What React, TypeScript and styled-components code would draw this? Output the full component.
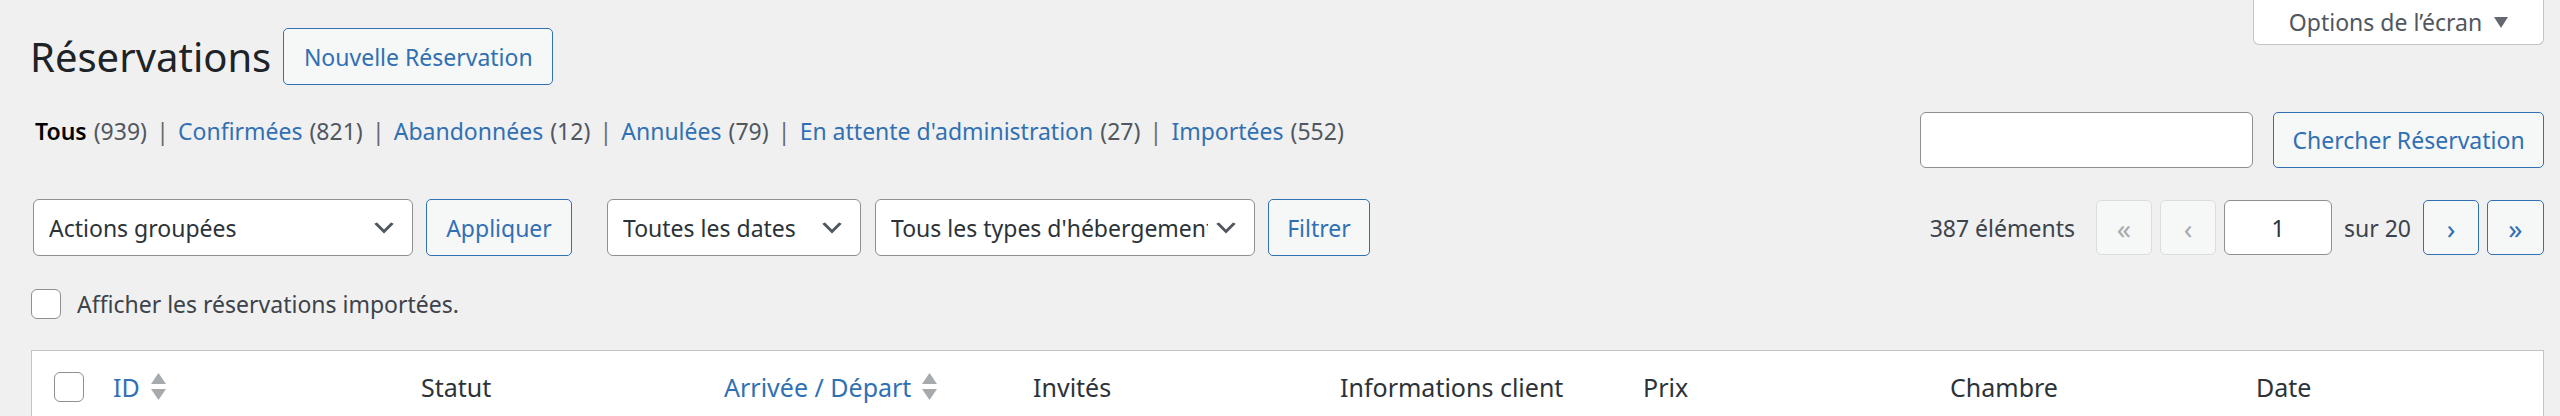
import React from 'react';
import styled, { createGlobalStyle } from 'styled-components';

const GlobalStyle = createGlobalStyle`
  html, body { margin: 0; padding: 0; background: #f0f0f1; }
  body {
    font-family: "Noto Sans", "Open Sans", "Liberation Sans", sans-serif;
    color: #3c434a;
    font-size: 23px;
  }
  * { box-sizing: border-box; }
`;

const BLUE = '#3070b3';

const Page = styled.div`
  width: 2560px;
  height: 416px;
  overflow: hidden;
  padding: 0 16px 0 30px;
  display: flex;
  flex-direction: column;
`;

const HeaderRow = styled.div`
  display: flex;
  align-items: flex-start;
  height: 85px;
`;

const TitleGroup = styled.div`
  display: flex;
  align-items: center;
  gap: 12px;
  margin-top: 28px;
`;

const Title = styled.h1`
  margin: 0;
  font-size: 40px;
  font-weight: 400;
  line-height: 57px;
  color: #1d2327;
`;

const Button = styled.button<{ $w: number; $h?: number; $disabled?: boolean; $size?: number }>`
  width: ${(p) => p.$w}px;
  height: ${(p) => p.$h ?? 57}px;
  padding: 0;
  display: inline-flex;
  align-items: center;
  justify-content: center;
  background: #f6f7f7;
  border: 1px solid ${(p) => (p.$disabled ? '#dcdcde' : BLUE)};
  border-radius: 5px;
  color: ${(p) => (p.$disabled ? '#a7aaad' : BLUE)};
  font-family: inherit;
  font-size: ${(p) => p.$size ?? 23}px;
  font-weight: 400;
  flex: none;
`;

const ScreenOptions = styled.div`
  margin-left: auto;
  width: 291px;
  height: 45px;
  background: #fff;
  border: 1px solid #c3c4c7;
  border-top: none;
  border-radius: 0 0 6px 6px;
  display: flex;
  align-items: center;
  justify-content: center;
  gap: 12px;
  color: #50575e;
  font-size: 23px;
`;

const FilterRow = styled.div`
  display: flex;
  justify-content: space-between;
  align-items: flex-start;
  margin-top: 27px;
`;

const StatusList = styled.ul`
  list-style: none;
  margin: 1px 0 0 5px;
  padding: 0;
  display: flex;
  align-items: center;
  line-height: 36px;
  color: #50575e;
`;

const StatusItem = styled.li<{ $current?: boolean }>`
  display: flex;
  gap: 7px;
  a {
    color: ${(p) => (p.$current ? '#000' : BLUE)};
    font-weight: ${(p) => (p.$current ? 600 : 400)};
    text-decoration: none;
  }
`;

const Sep = styled.span`
  color: #646970;
  width: 31px;
  text-align: center;
  flex: none;
`;

const SearchBox = styled.div`
  display: flex;
  gap: 20px;
`;

const TextInput = styled.div<{ $w: number; $h?: number }>`
  width: ${(p) => p.$w}px;
  height: ${(p) => p.$h ?? 56}px;
  background: #fff;
  border: 1px solid #8c8f94;
  border-radius: 6px;
  display: flex;
  align-items: center;
  justify-content: center;
  color: #2c3338;
  flex: none;
`;

const Tablenav = styled.div`
  display: flex;
  align-items: center;
  justify-content: space-between;
  margin-top: 31px;
  height: 57px;
`;

const Actions = styled.div`
  display: flex;
  align-items: center;
  padding-left: 3px;
`;

const Select = styled.div<{ $w: number; $gap: number }>`
  width: ${(p) => p.$w}px;
  height: 57px;
  margin-right: ${(p) => p.$gap}px;
  background: #fff;
  border: 1px solid #8c8f94;
  border-radius: 6px;
  display: flex;
  align-items: center;
  padding: 0 14px 0 15px;
  color: #2c3338;
  flex: none;
  span {
    flex: 1;
    overflow: hidden;
    white-space: nowrap;
    margin-right: 4px;
  }
  svg { flex: none; }
`;

const Spacer = styled.div<{ $w: number }>`
  width: ${(p) => p.$w}px;
  flex: none;
`;

const Pagination = styled.div`
  display: flex;
  align-items: center;
  gap: 8px;
  color: #3c434a;
`;

const Count = styled.span`
  margin-right: 13px;
`;

const PageOf = styled.span`
  margin: 0 4px;
`;

const CheckRow = styled.label`
  display: flex;
  align-items: center;
  gap: 16px;
  margin-top: 32px;
  margin-left: 1px;
  color: #3c434a;
`;

const Checkbox = styled.span`
  width: 30px;
  height: 30px;
  background: #fff;
  border: 1px solid #8c8f94;
  border-radius: 6px;
  flex: none;
`;

const Table = styled.div`
  margin-top: 30px;
  margin-left: 1px;
  width: 2513px;
  height: 140px;
  background: #fff;
  border: 1px solid #c3c4c7;
  flex: none;
`;

const HeadRow = styled.div`
  display: grid;
  grid-template-columns: 67px 308px 303px 309px 307px 303px 307px 306px 1fr;
  height: 72px;
  align-items: center;
  color: #2c3338;
  font-size: 25px;
`;

const CheckCell = styled.div`
  padding-left: 22px;
  display: flex;
  align-items: center;
`;

const Th = styled.div<{ $sortable?: boolean }>`
  padding-left: 14px;
  display: flex;
  align-items: center;
  gap: 11px;
  color: ${(p) => (p.$sortable ? BLUE : '#2c3338')};
`;

const Chevron = () => (
  <svg width="28" height="28" viewBox="0 0 20 20">
    <path d="M5 6l5 5 5-5 2 1-7 7-7-7 2-1z" fill="#50575e" />
  </svg>
);

const SortIcon = () => (
  <svg width="15" height="30" viewBox="0 0 15 30">
    <polygon points="0,12 7.5,1 15,12" fill="#a7aaad" />
    <polygon points="0,17 15,17 7.5,28" fill="#a7aaad" />
  </svg>
);

const DownTriangle = () => (
  <svg width="14" height="11" viewBox="0 0 14 11">
    <polygon points="0,0 14,0 7,11" fill="#646970" />
  </svg>
);

const statuses: { label: string; count: number; current?: boolean }[] = [
  { label: 'Tous', count: 939, current: true },
  { label: 'Confirmées', count: 821 },
  { label: 'Abandonnées', count: 12 },
  { label: 'Annulées', count: 79 },
  { label: "En attente d'administration", count: 27 },
  { label: 'Importées', count: 552 },
];

const columns: { label: string; sortable?: boolean }[] = [
  { label: 'ID', sortable: true },
  { label: 'Statut' },
  { label: 'Arrivée / Départ', sortable: true },
  { label: 'Invités' },
  { label: 'Informations client' },
  { label: 'Prix' },
  { label: 'Chambre' },
  { label: 'Date' },
];

export default function App() {
  return (
    <>
      <GlobalStyle />
      <Page>
        <HeaderRow>
          <TitleGroup>
            <Title>Réservations</Title>
            <Button $w={270}>Nouvelle Réservation</Button>
          </TitleGroup>
          <ScreenOptions>
            Options de l’écran
            <DownTriangle />
          </ScreenOptions>
        </HeaderRow>

        <FilterRow>
          <StatusList>
            {statuses.map((s, i) => (
              <React.Fragment key={s.label}>
                {i > 0 && <Sep>|</Sep>}
                <StatusItem $current={s.current}>
                  <a href="#">{s.label}</a>
                  <span>({s.count})</span>
                </StatusItem>
              </React.Fragment>
            ))}
          </StatusList>
          <SearchBox>
            <TextInput $w={333} />
            <Button $w={271} $h={56}>Chercher Réservation</Button>
          </SearchBox>
        </FilterRow>

        <Tablenav>
          <Actions>
            <Select $w={380} $gap={13}>
              <span>Actions groupées</span>
              <Chevron />
            </Select>
            <Button $w={146}>Appliquer</Button>
            <Spacer $w={35} />
            <Select $w={254} $gap={14}>
              <span>Toutes les dates</span>
              <Chevron />
            </Select>
            <Select $w={380} $gap={13}>
              <span>Tous les types d'hébergement</span>
              <Chevron />
            </Select>
            <Button $w={102}>Filtrer</Button>
          </Actions>
          <Pagination>
            <Count>387 éléments</Count>
            <Button $w={56} $h={55} $disabled $size={28}>«</Button>
            <Button $w={56} $h={55} $disabled $size={28}>‹</Button>
            <TextInput $w={108} $h={55}>1</TextInput>
            <PageOf>sur 20</PageOf>
            <Button $w={56} $h={55} $size={28}>›</Button>
            <Button $w={57} $h={55} $size={28}>»</Button>
          </Pagination>
        </Tablenav>

        <CheckRow>
          <Checkbox />
          Afficher les réservations importées.
        </CheckRow>

        <Table>
          <HeadRow>
            <CheckCell>
              <Checkbox />
            </CheckCell>
            {columns.map((c) => (
              <Th key={c.label} $sortable={c.sortable}>
                {c.label}
                {c.sortable && <SortIcon />}
              </Th>
            ))}
          </HeadRow>
        </Table>
      </Page>
    </>
  );
}
